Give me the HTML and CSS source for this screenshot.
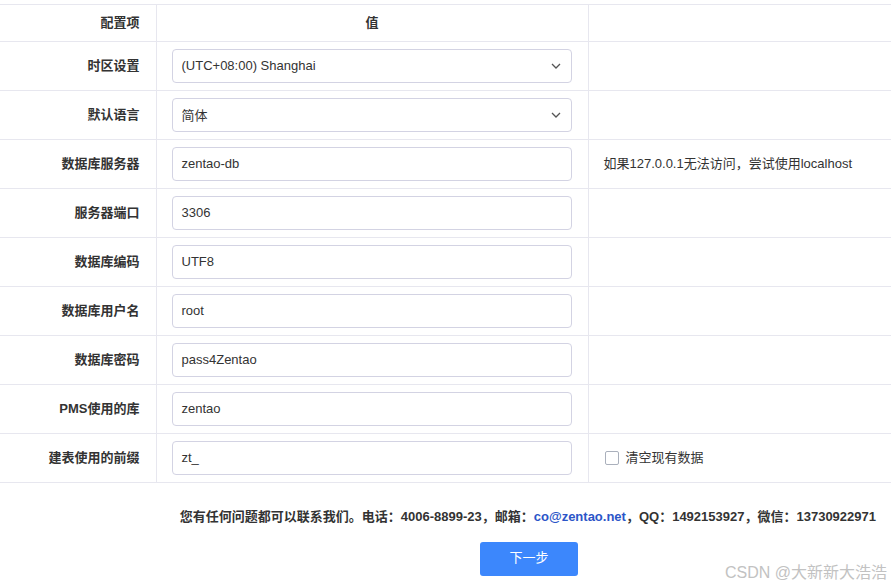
FILE: index.html
```html
<!DOCTYPE html>
<html lang="zh">
<head>
<meta charset="utf-8">
<link rel="stylesheet" href="styles.css">
</head>
<body>
<div class="page">
  <table class="cfg">
    <colgroup><col class="c1"><col class="c2"><col class="c3"></colgroup>
    <thead>
      <tr class="head"><th class="lbl">配置项</th><th class="val-h">值</th><th></th></tr>
    </thead>
    <tbody>
      <tr><th class="lbl">时区设置</th><td class="val"><div class="box sel"><span>(UTC+08:00) Shanghai</span><svg class="chev" viewBox="0 0 10 6" width="10" height="6"><path d="M1 1 L5 5 L9 1" fill="none" stroke="#555" stroke-width="1.3"/></svg></div></td><td class="hint"></td></tr>
      <tr><th class="lbl">默认语言</th><td class="val"><div class="box sel"><span>简体</span><svg class="chev" viewBox="0 0 10 6" width="10" height="6"><path d="M1 1 L5 5 L9 1" fill="none" stroke="#555" stroke-width="1.3"/></svg></div></td><td class="hint"></td></tr>
      <tr><th class="lbl">数据库服务器</th><td class="val"><div class="box">zentao-db</div></td><td class="hint">如果127.0.0.1无法访问，尝试使用localhost</td></tr>
      <tr><th class="lbl">服务器端口</th><td class="val"><div class="box">3306</div></td><td class="hint"></td></tr>
      <tr><th class="lbl">数据库编码</th><td class="val"><div class="box">UTF8</div></td><td class="hint"></td></tr>
      <tr><th class="lbl">数据库用户名</th><td class="val"><div class="box">root</div></td><td class="hint"></td></tr>
      <tr><th class="lbl">数据库密码</th><td class="val"><div class="box">pass4Zentao</div></td><td class="hint"></td></tr>
      <tr><th class="lbl">PMS使用的库</th><td class="val"><div class="box">zentao</div></td><td class="hint"></td></tr>
      <tr><th class="lbl">建表使用的前缀</th><td class="val"><div class="box">zt_</div></td><td class="hint"><label class="chk"><span class="cb"></span>清空现有数据</label></td></tr>
    </tbody>
  </table>
  <p class="contact">您有任何问题都可以联系我们。电话：4006-8899-23，邮箱：<a class="mail">co@zentao.net</a>，QQ：1492153927，微信：13730922971</p>
  <div class="actions"><button class="next">下一步</button></div>
  <div class="wm">CSDN @大新新大浩浩</div>
</div>
</body>
</html>
```
FILE: styles.css
```css
html, body {
  margin: 0;
  padding: 0;
  background: #fff;
}
body {
  font-family: "Liberation Sans", Arial, "Noto Sans CJK SC", sans-serif;
  font-size: 13px;
  color: #333;
}
.page {
  position: relative;
  width: 891px;
  height: 587px;
  padding-top: 4px;
  box-sizing: border-box;
  overflow: hidden;
}
.cfg {
  width: 891px;
  border-collapse: collapse;
  table-layout: fixed;
}
.c1 { width: 156px; }
.c2 { width: 432px; }
.c3 { width: 303px; }
.cfg th, .cfg td {
  border-top: 1px solid #e7e7ef;
  border-bottom: 1px solid #e7e7ef;
  border-left: 1px solid #e7e7ef;
  padding: 0 0 3px 0;
  height: 48px;
  box-sizing: border-box;
}
.cfg tr > :first-child { border-left: none; }
.cfg .head th {
  height: 37px;
  font-weight: bold;
}
.lbl {
  text-align: right;
  padding-right: 16px !important;
  font-weight: bold;
  color: #333;
}
.val-h { text-align: center; }
.val {
  padding: 7px 15px !important;
}
.box {
  width: 400px;
  height: 34px;
  box-sizing: border-box;
  border: 1px solid #d3d3e3;
  border-radius: 4px;
  padding: 0 10px 2px 9px;
  display: flex;
  align-items: center;
  color: #333;
}
.sel { justify-content: space-between; padding-right: 10px; }
.chev { display: block; margin-top: 2px; }
.hint {
  padding-left: 15px !important;
  color: #333;
}
.chk {
  display: flex;
  align-items: center;
  gap: 7px;
}
.cb {
  width: 12px;
  height: 12px;
  border: 1px solid #aab0bc;
  border-radius: 2px;
  background: #fff;
  margin-left: 1px;
  margin-top: 2px;
}
.contact {
  margin: 0;
  padding: 26px 15px 1px 0;
  text-align: right;
  font-weight: bold;
  line-height: 16px;
  color: #333;
}
.mail { color: #2b55c8; text-decoration: none; }
.actions {
  padding: 16px 0 0 480px;
}
.next {
  width: 98px;
  height: 34px;
  border: none;
  border-radius: 3px;
  background: #3c87fc;
  color: #fff;
  font-family: "Liberation Sans", Arial, "Noto Sans CJK SC", sans-serif;
  font-size: 13px;
  padding: 0 0 5px 0;
}
.wm {
  position: absolute;
  right: 4px;
  bottom: 4px;
  font-size: 16px;
  color: #c2c2c2;
  font-family: "Liberation Sans", Arial, "Noto Sans CJK SC", sans-serif;
}
```
